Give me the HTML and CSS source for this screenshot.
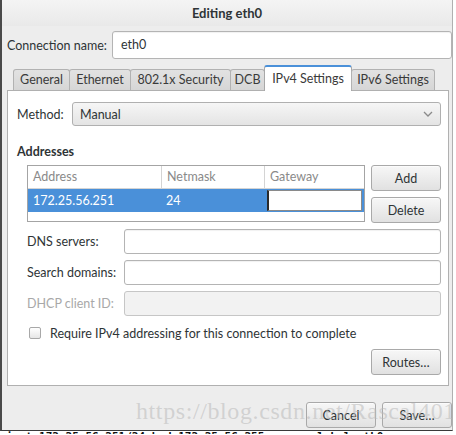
FILE: index.html
```html
<!DOCTYPE html>
<html lang="en">
<head>
    <meta charset="UTF-8">
    <title>Editing eth0</title>
    <link rel="stylesheet" href="styles.css">
</head>
<body>
    <div class="window">
        <div class="titlebar">Editing eth0</div>

        <div class="conn-row">
            <span class="label">Connection name:</span>
            <div class="entry conn-entry">eth0</div>
        </div>

        <div class="tabs">
            <div class="tab tab-general">General</div>
            <div class="tab tab-ethernet">Ethernet</div>
            <div class="tab tab-security">802.1x Security</div>
            <div class="tab tab-dcb">DCB</div>
            <div class="tab tab-ipv4 active">IPv4 Settings</div>
            <div class="tab tab-ipv6">IPv6 Settings</div>
        </div>

        <div class="panel">
            <div class="method-row">
                <span class="label">Method:</span>
                <div class="combo">
                    <span>Manual</span>
                    <svg class="chevron" width="10" height="6" viewBox="0 0 10 6"><path d="M1 1 L5 5 L9 1" fill="none" stroke="#8a8a8a" stroke-width="1.3"/></svg>
                </div>
            </div>

            <div class="section-title">Addresses</div>

            <div class="addr-row">
                <div class="addr-table">
                    <div class="row head">
                        <div class="cell c-addr">Address</div>
                        <div class="cell c-mask">Netmask</div>
                        <div class="cell c-gw">Gateway</div>
                    </div>
                    <div class="row selected">
                        <div class="cell c-addr">172.25.56.251</div>
                        <div class="cell c-mask">24</div>
                        <div class="cell c-gw"><div class="cell-edit"></div></div>
                    </div>
                </div>
                <div class="addr-buttons">
                    <button class="btn">Add</button>
                    <button class="btn">Delete</button>
                </div>
            </div>

            <div class="field-row">
                <span class="label">DNS servers:</span>
                <div class="entry"></div>
            </div>
            <div class="field-row">
                <span class="label">Search domains:</span>
                <div class="entry"></div>
            </div>
            <div class="field-row disabled">
                <span class="label">DHCP client ID:</span>
                <div class="entry"></div>
            </div>

            <div class="check-row">
                <span class="checkbox"></span>
                <span>Require IPv4 addressing for this connection to complete</span>
            </div>

            <div class="routes-row">
                <button class="btn">Routes…</button>
            </div>
        </div>

        <div class="actions">
            <button class="btn">Cancel</button>
            <button class="btn">Save…</button>
        </div>

        <div class="watermark">https://blog.csdn.net/Rascal401</div>
    </div>
    <div class="terminal">inet 172.25.56.251/24 brd 172.25.56.255 scope global eth0</div>
</body>
</html>
```

FILE: styles.css
```css
body { margin: 0; background: #ffffff; font-family: Lato, "Open Sans", sans-serif; font-size: 12.5px; color: #2e3436; }
.window { position: relative; width: 450px; height: 430px; background: #ededed; border-left: 2px solid #4a4a4a; border-right: 1px solid #b0b0b0; border-bottom: 1px solid #3a3a3a; overflow: hidden; }
.titlebar { height: 26px; line-height: 26px; text-align: center; font-weight: bold; font-size: 13px; background: linear-gradient(#f4f4f4, #e9e9e9); }
.label { white-space: nowrap; }

.entry { height: 23px; border: 1px solid #b4b4b4; border-radius: 3px; background: #ffffff; box-shadow: inset 0 1px 1px rgba(0, 0, 0, 0.06); line-height: 23px; padding: 0 8px; box-sizing: content-box; }

.conn-row { display: flex; align-items: center; margin-top: 5px; padding-left: 5px; }
.conn-row .label { width: 105px; }
.conn-entry { flex: 1; height: 26px; line-height: 26px; }

.tabs { display: flex; align-items: flex-end; height: 25px; margin-top: 6px; padding-left: 11px; position: relative; z-index: 1; }
.tab { height: 21px; line-height: 20px; text-align: center; box-sizing: border-box; background: linear-gradient(#e2e2e2, #d6d6d6); border: 1px solid #b2b2b2; border-bottom: none; border-radius: 3px 3px 0 0; margin-right: -1px; color: #3a3a3a; }
.tab.active { height: 26px; line-height: 24px; background: #ffffff; border-color: #a8a8a8; border-top: 2px solid #4a90d9; margin-bottom: -1px; }
.tab-general { width: 57px; }
.tab-ethernet { width: 62px; }
.tab-security { width: 101px; }
.tab-dcb { width: 35px; }
.tab-ipv4 { width: 88px; }
.tab-ipv6 { width: 84px; }

.panel { margin-left: 5px; width: 442px; height: 296px; background: #ffffff; border: 1px solid #b0b0b0; padding: 11px 7px 0 9px; box-sizing: border-box; }
.method-row { display: flex; align-items: center; }
.method-row .label { width: 55px; }
.combo { flex: 1; height: 24px; box-sizing: border-box; display: flex; align-items: center; justify-content: space-between; padding: 0 7px 0 7px; border: 1px solid #b0b0b0; border-radius: 3px; background: linear-gradient(#f6f6f6, #e4e4e4); }

.section-title { font-weight: bold; margin-top: 18px; height: 16px; line-height: 16px; }

.addr-row { display: flex; gap: 6px; margin-top: 5px; padding-left: 10px; }
.addr-table { width: 339px; height: 57px; box-sizing: border-box; border: 1px solid #a4a4a4; background: #ffffff; }
.row { display: flex; height: 23px; line-height: 23px; }
.row.head { height: 22px; line-height: 22px; color: #8a8a8a; border-bottom: 1px solid #d4d4d4; }
.row.selected { background: #4a90d9; color: #ffffff; }
.cell { box-sizing: border-box; padding-left: 5px; }
.row.head .cell + .cell { border-left: 1px solid #d4d4d4; }
.c-addr { width: 133px; }
.c-mask { width: 103px; }
.c-gw { flex: 1; padding: 1px 2px 1px 3px; }
.row.head .c-gw { padding: 0 0 0 5px; }
.cell-edit { height: 21px; box-sizing: border-box; background: #ffffff; border: 1px solid #8a8a8a; border-left: 2px solid #2a2a2a; }

.addr-buttons { display: flex; flex-direction: column; gap: 6px; }
.btn { font-family: inherit; font-size: 12.5px; color: #2e3436; height: 26px; box-sizing: border-box; border: 1px solid #a9a9a9; border-radius: 3px; background: linear-gradient(#f7f7f7, #e1e1e1); box-shadow: 0 1px 0 rgba(255, 255, 255, 0.6) inset; padding: 0; cursor: pointer; }
.addr-buttons .btn { width: 70px; }

.field-row { display: flex; align-items: center; margin-top: 6px; padding-left: 10px; }
.addr-row + .field-row { margin-top: 6px; }
.field-row .label { width: 97px; }
.field-row .entry { flex: 1; height: 23px; }
.field-row.disabled .label { color: #a8a8a8; }
.field-row.disabled .entry { background: #f2f2f2; box-shadow: none; border-color: #c6c6c6; }

.check-row { display: flex; align-items: center; gap: 9px; margin-top: 9px; padding-left: 12px; height: 16px; }
.checkbox { width: 10px; height: 10px; border: 1px solid #a8a8a8; border-radius: 2px; background: linear-gradient(#ffffff, #e6e6e6); }

.routes-row { display: flex; justify-content: flex-end; margin-top: 8px; }
.routes-row .btn { width: 70px; }

.actions { display: flex; justify-content: flex-end; gap: 6px; margin-top: 16px; padding-right: 0; }
.actions .btn { width: 70px; }

.watermark { position: absolute; left: 134px; top: 398px; font-family: "Liberation Serif", serif; font-size: 24px; letter-spacing: 0.6px; color: rgba(185, 185, 185, 0.55); white-space: nowrap; pointer-events: none; }

.terminal { height: 3px; overflow: hidden; font-family: "DejaVu Sans Mono", monospace; font-size: 11px; line-height: 11px; font-weight: bold; color: #111; padding-left: 6px; }
```
